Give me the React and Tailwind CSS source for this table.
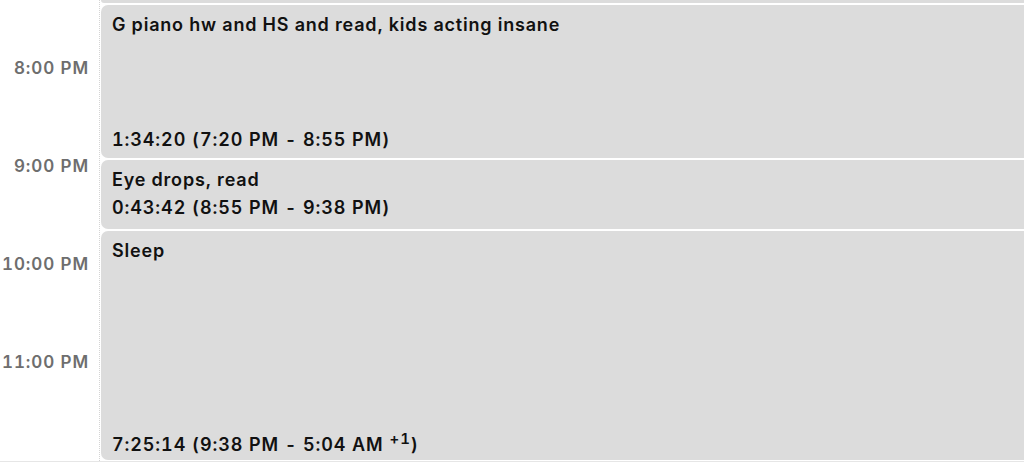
import React from 'react';

const hours = ['8:00 PM', '9:00 PM', '10:00 PM', '11:00 PM'];

function EventBlock({ title, duration, range, nextDay, height, spread, bottom = 'pb-[4px]' }) {
  return (
    <div
      className={`flex flex-col ${spread ? 'justify-between' : ''} ${bottom} shrink-0 rounded-l-[7px] bg-[#dcdcdc] pl-[11px] pt-[6px] text-[18px] font-semibold leading-[28px] tracking-[0.8px] text-[#111]`}
      style={{ height }}
    >
      <div>{title}</div>
      <div className="tabular-nums tracking-[0.9px]">
        {duration} ({range}
        {nextDay && <span className="relative -top-[7px] ml-[6px] text-[15px] leading-none">+1</span>})
      </div>
    </div>
  );
}

export default function App() {
  return (
    <div className="flex h-[463px] w-[1024px] flex-col overflow-hidden bg-white font-['Inter',sans-serif]">
      <div className="flex h-[461px] shrink-0">
        {/* hour labels */}
        <div className="flex w-[100px] shrink-0 flex-col items-end border-r border-dotted border-[#d4d4d4] pr-[10px] pt-[58px]">
          {hours.map(h => (
            <div key={h} className="h-[98px] text-[17px] font-semibold leading-[20px] tracking-[0.9px] tabular-nums text-[#6e6e6e]">
              {h}
            </div>
          ))}
        </div>

        {/* events */}
        <div className="flex flex-1 flex-col gap-[2px] pl-[1px]">
          <div className="h-[3px] shrink-0 rounded-bl-[7px] bg-[#dcdcdc]" />
          <EventBlock
            title="G piano hw and HS and read, kids acting insane"
            duration="1:34:20"
            range="7:20 PM - 8:55 PM"
            height={153}
            spread
          />
          <EventBlock title="Eye drops, read" duration="0:43:42" range="8:55 PM - 9:38 PM" height={69} />
          <EventBlock
            title="Sleep"
            duration="7:25:14"
            range="9:38 PM - 5:04 AM"
            nextDay
            height={229}
            spread
            bottom="pb-[1px]"
          />
        </div>
      </div>
      <div className="h-px bg-[#e6e6e6]" />
    </div>
  );
}
